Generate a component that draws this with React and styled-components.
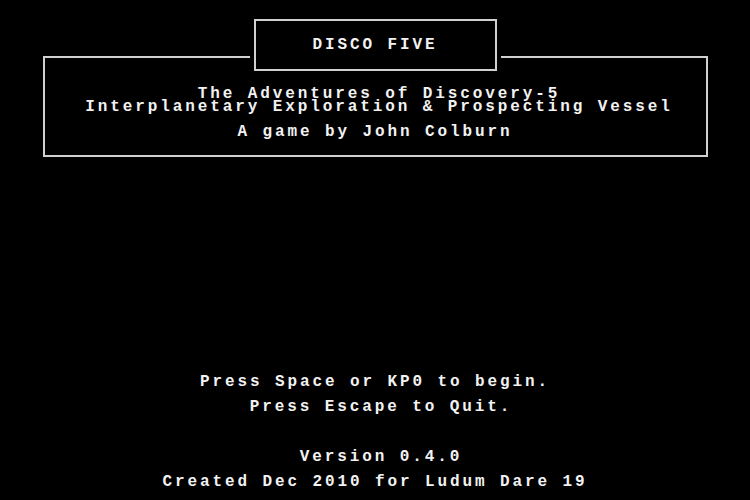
import React from "react";
import styled, { createGlobalStyle } from "styled-components";

const GlobalStyle = createGlobalStyle`
  html, body {
    margin: 0;
    padding: 0;
    background: #000;
  }
  body {
    font-family: "Liberation Mono", "DejaVu Sans Mono", monospace;
  }
`;

const Screen = styled.div`
  width: 750px;
  height: 500px;
  background: #000;
  color: #f2f2f2;
  display: flex;
  flex-direction: column;
  overflow: hidden;
`;

const Header = styled.header`
  display: flex;
  flex-direction: column;
  align-items: center;
  padding-top: 19px;
`;

const TitleBox = styled.div`
  position: relative;
  z-index: 1;
  width: 239px;
  height: 48px;
  border: 2px solid #d0d0d0;
  background: #000;
  box-shadow: 0 0 0 4px #000;
  display: flex;
  align-items: center;
  justify-content: center;
`;

const Frame = styled.div`
  box-sizing: border-box;
  margin-top: -15px;
  width: 665px;
  height: 101px;
  border: 2px solid #d0d0d0;
  display: flex;
  flex-direction: column;
  align-items: center;
  padding-top: 30px;
`;

const Text = styled.div`
  font-weight: bold;
  font-size: 16px;
  letter-spacing: 2.9px;
  line-height: ${(p) => p.$lh || 25}px;
  white-space: pre;
  text-align: center;
  padding-left: ${(p) => p.$shift || 0}px;
  margin-top: ${(p) => p.$gap || 0}px;
`;

const Footer = styled.footer`
  display: flex;
  flex-direction: column;
  align-items: center;
  margin-top: auto;
  padding-bottom: 5px;
`;

export default function App() {
  return (
    <>
      <GlobalStyle />
      <Screen>
        <Header>
          <TitleBox>
            <Text>DISCO FIVE</Text>
          </TitleBox>
          <Frame>
            <Text $lh={13} $shift={8}>The Adventures of Discovery-5</Text>
            <Text $lh={13} $shift={8}>Interplanetary Exploration &amp; Prospecting Vessel</Text>
            <Text $lh={13} $gap={12}>A game by John Colburn</Text>
          </Frame>
        </Header>
        <Footer>
          <Text>Press Space or KP0 to begin.</Text>
          <Text $shift={12}>Press Escape to Quit.</Text>
          <Text $gap={25} $shift={12}>Version 0.4.0</Text>
          <Text>Created Dec 2010 for Ludum Dare 19</Text>
        </Footer>
      </Screen>
    </>
  );
}
